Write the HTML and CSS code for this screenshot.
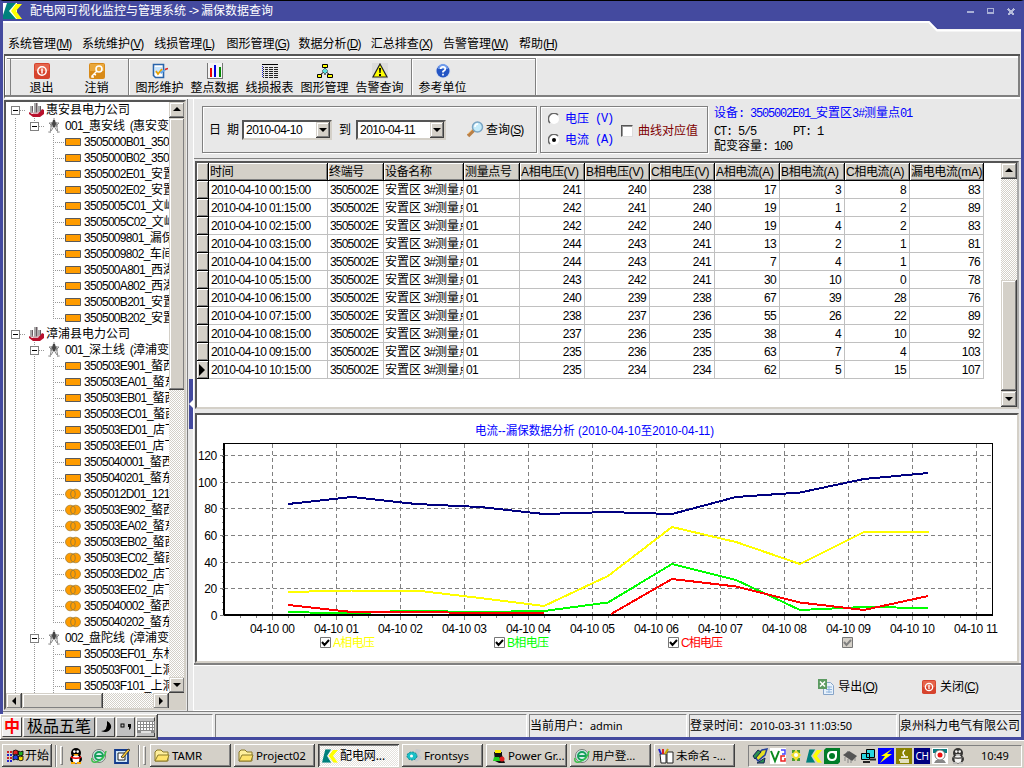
FILE: index.html
```html
<!DOCTYPE html>
<html lang="zh-CN">
<head>
<meta charset="utf-8">
<title>配电网可视化监控与管理系统</title>
<link rel="stylesheet" href="styles.css">
</head>
<body>
<svg class="defs" width="0" height="0">
  <symbol id="company" viewBox="0 0 16 16"><path d="M2 4h3v7H2zM6 1h3v11H6zM10 4h3v7h-3z" fill="#aaa"/><path d="M4 4h1v7H4zM8 1h1.500v11H8zM12 4h1v7h-1z" fill="#665a60"/><path d="M1 10l3 2 4-1 4-1 2-3 2 1v4l-4 3H5l-4-3z" fill="#b8102c"/><path d="M3 9l4 2 5-2-2 3H6z" fill="#ddb0b8"/></symbol>
  <symbol id="tower" viewBox="0 0 16 16"><path d="M8 0v4M3 5h10M4 8h8M6 4L4 15M10 4l2 11M6 5l5 8M10 5l-5 8M3 5l3 3M13 5l-3 3" stroke="#888" fill="none"/><path d="M7 2h2l1 4-1 3H7L6 6z" fill="#444"/><path d="M2 14h3M11 14h3" stroke="#aaa"/></symbol>
  <symbol id="bar" viewBox="0 0 16 16"><path d="M.5 4.500h15v7H.5z" fill="#ff9c00" stroke="#5a5a5a"/></symbol>
  <symbol id="coil" viewBox="0 0 16 16"><circle cx="5.300" cy="8" r="4.800" fill="#ff9c00" stroke="#a5813a" stroke-width=".8"/><circle cx="10.700" cy="8" r="4.800" fill="#ff9c00" stroke="#a5813a" stroke-width=".8"/><ellipse cx="8" cy="8" rx="2.300" ry="3.900" fill="#ff9c00" stroke="#8d793f" stroke-width=".8"/></symbol>
  <symbol id="power" viewBox="0 0 16 16"><rect width="16" height="16" rx="2" fill="#d6432d"/><rect x="1" y="1" width="14" height="7" rx="1" fill="#e5654c"/><circle cx="8" cy="8" r="4.200" fill="none" stroke="#fff" stroke-width="1.500"/><path d="M8 5.500v5" stroke="#fff" stroke-width="1.500"/></symbol>
  <symbol id="klogo" viewBox="0 0 19 16"><path d="M0 0h14v16H0z" fill="#fff"/><path d="M4 0h9L6 8l7 8H0V12z" fill="#00807c"/><path d="M13 1h6l-6 7 6 8h-5L8 8z" fill="#ff0"/></symbol>
  <symbol id="klogo-small" viewBox="0 0 19 16"><path d="M4 0h7L6 8l5 8H0z" fill="#00807c"/><path d="M13 1h6l-6 7 6 8h-5L8 8z" fill="#ff0"/></symbol>
  <symbol id="folder" viewBox="0 0 16 14"><path d="M1 12V3l2-2h4l2 2h5v9z" fill="#ffef9c" stroke="#8b7a2a"/><path d="M1 12l3-6h11l-2 6z" fill="#ffe36b" stroke="#8b7a2a"/></symbol>
  <symbol id="browser" viewBox="0 0 16 16"><circle cx="8" cy="8" r="6.500" fill="#d8f0ec" stroke="#777"/><circle cx="8" cy="8" r="4" fill="none" stroke="#16a05c" stroke-width="2"/><path d="M5 8h7" stroke="#16a05c" stroke-width="2"/><path d="M1 10Q0 15 5 14Q14 11 15 3" fill="none" stroke="#3ac04a" stroke-width="1.500"/></symbol>
  <symbol id="up" viewBox="0 0 16 16"><path d="M8 5l4 4H4z"/></symbol>
  <symbol id="down" viewBox="0 0 16 16"><path d="M4 6h8l-4 4z"/></symbol>
  <symbol id="penguin" viewBox="0 0 16 16"><ellipse cx="8" cy="5" rx="5" ry="5"/><ellipse cx="8" cy="11" rx="6" ry="4.500"/><ellipse cx="8" cy="11" rx="3.500" ry="4" fill="#fff"/><circle cx="6.300" cy="3.600" r="1.300" fill="#fff"/><circle cx="9.700" cy="3.600" r="1.300" fill="#fff"/><path d="M5 6h6l-3 2z" fill="#fa0"/><path d="M3 8q5 3 10 0v2q-5 2-10 0z" fill="#e00"/><path d="M3 14h4v2H3zM9 14h4v2H9z" fill="#fa0"/></symbol>
</svg>

<div class="window">
  <header class="title">
    <svg class="title-logo" width="19" height="16" viewBox="0 0 19 16"><use href="#klogo"/></svg>
    <span class="title-text">配电网可视化监控与管理系统<i> -&gt; </i>漏保数据查询</span>
    <svg class="notch" width="95" height="12" viewBox="926 20 95 12"><path d="M926 20h95v9h-84l-9-8z" fill="#444a9f"/><path d="M926 22h3l8 8.500h84" fill="none" stroke="#fff" stroke-width="2"/></svg>
    <svg class="winbtns" width="52" height="10" viewBox="0 0 52 10" shape-rendering="crispEdges"><path d="M1 6h7M21.500 2.500h6v5h-6zM21 7h7" stroke="#a9b0d6" stroke-width="1.500" fill="none"/><path d="M42 3l6 6M48 3l-6 6" stroke="#b4badb" stroke-width="2"/></svg>
  </header>
  <nav class="menu">
    <span>系统管理<i>(<u>M</u>)</i></span><span>系统维护<i>(<u>V</u>)</i></span><span>线损管理<i>(<u>L</u>)</i></span><span>图形管理<i>(<u>G</u>)</i></span><span>数据分析<i>(<u>D</u>)</i></span><span>汇总排查<i>(<u>X</u>)</i></span><span class="wide">告警管理<i>(<u>W</u>)</i></span><span>帮助<i>(<u>H</u>)</i></span>
  </nav>
  <div class="toolbar">
    <div class="tools">
      <div class="group first">
        <div class="tool"><svg width="16" height="16"><use href="#power"/></svg>退出</div>
        <div class="tool"><svg width="16" height="16" viewBox="0 0 16 16"><rect width="16" height="16" rx="2" fill="#d88a18"/><rect x="1" y="1" width="14" height="7" fill="#eaa83c"/><circle cx="10" cy="6" r="3" fill="none" stroke="#fff" stroke-width="1.600"/><path d="M8 8l-5 5v1h2M5 11l2 1" fill="none" stroke="#fff" stroke-width="1.500"/></svg>注销</div>
      </div>
      <div class="group second">
        <div class="tool"><svg width="16" height="16" viewBox="0 0 16 16"><path d="M1.500 1.500h10v13h-8l-2-2z" fill="#fff" stroke="#2864ac" stroke-width="1.600"/><path d="M3 4h7v6H3z" fill="#c8e6ff"/><path d="M4 8l2 3 4-5" fill="none" stroke="#e8a000" stroke-width="1.700"/><path d="M8 9l5-3 1 1-5 4z" fill="#61a5e8"/><path d="M13 6.500l3-1" stroke="#d22" stroke-width="1.500"/></svg>图形维护</div>
        <div class="tool"><svg width="16" height="16" viewBox="0 0 16 16" shape-rendering="crispEdges"><path d="M0 0h16v16H0z" fill="#f4f4f4"/><path d="M.5 0v15.500H15.500V0" stroke="#777" fill="none"/><path d="M3 5h2v9H3z" fill="#e00"/><path d="M7 2h2v12H7z" fill="#00d"/><path d="M12 4h2v10h-2z" fill="#080"/></svg>整点数据</div>
        <div class="tool"><svg width="16" height="16" viewBox="0 -1 16 16" shape-rendering="crispEdges"><path d="M0 .5h16" stroke="#000"/><path d="M1 3.500h15M1 5.500h15M1 7.500h15M1 9.500h15M1 11.500h15M1 13.500h15" stroke="#222"/><path d="M.5 2v12" stroke="#22c" stroke-dasharray="1 1"/><path d="M2.500 1v14M6.500 1v14M11.500 1v14" stroke="#e8e8e8"/></svg>线损报表</div>
        <div class="tool"><svg width="16" height="16" viewBox="0 0 16 16"><path d="M8 4v8M8 8l-5 4M8 8l5 4" stroke="#000"/><path d="M5.500 1.500h5v3h-5zM.5 11.500h4v3h-4zM10.500 11.500h5v3h-5z" fill="#ff0" stroke="#000"/><path d="M8 5l3 3-3 3-3-3z" fill="#5ce0e0" stroke="#333" stroke-width=".5"/></svg>图形管理</div>
        <div class="tool"><svg width="16" height="16" viewBox="0 0 16 16"><path d="M0 0h16v16H0z" fill="#ddd"/><path d="M8 1l7 13H1z" fill="#ff0" stroke="#222" stroke-width="1.200"/><path d="M7 5h2l-.4 5H7.400zM7 11h2v2H7z"/></svg>告警查询</div>
      </div>
      <div class="group third">
        <div class="tool"><svg width="16" height="16" viewBox="0 0 16 16"><circle cx="8" cy="8" r="7.500" fill="#d9e0ee"/><circle cx="8" cy="8" r="6.500" fill="#2455c4"/><path d="M3 6a5 5 0 0 1 10 0z" fill="#6f9bea"/><path d="M5.700 6q0-2.200 2.300-2.200T10.300 6Q10.300 7.200 8 8.600v1M8 10.800v1.700" stroke="#fff" stroke-width="1.700" fill="none"/></svg>参考单位</div>
      </div>
    </div>
  </div>

  <div class="work">
    <aside class="treepane">
      <div class="tree">
        <div class="row l0 top"><b class="box"></b><b class="dots"></b><svg><use href="#company"/></svg>惠安县电力公司</div>
        <div class="row l1 end"><b class="box"></b><b class="dots"></b><svg><use href="#tower"/></svg><i>001_</i>惠安线<s></s><i>(</i>惠安变</div>
        <div class="row l2"><b class="dots"></b><svg><use href="#bar"/></svg><i>3505000B01_350</i></div>
        <div class="row l2"><b class="dots"></b><svg><use href="#bar"/></svg><i>3505000B02_350</i></div>
        <div class="row l2"><b class="dots"></b><svg><use href="#bar"/></svg><i>3505002E01_</i>安置</div>
        <div class="row l2"><b class="dots"></b><svg><use href="#bar"/></svg><i>3505002E02_</i>安置</div>
        <div class="row l2"><b class="dots"></b><svg><use href="#bar"/></svg><i>3505005C01_</i>文屿</div>
        <div class="row l2"><b class="dots"></b><svg><use href="#bar"/></svg><i>3505005C02_</i>文屿</div>
        <div class="row l2"><b class="dots"></b><svg><use href="#bar"/></svg><i>3505009801_</i>漏保</div>
        <div class="row l2"><b class="dots"></b><svg><use href="#bar"/></svg><i>3505009802_</i>车间</div>
        <div class="row l2"><b class="dots"></b><svg><use href="#bar"/></svg><i>350500A801_</i>西湖</div>
        <div class="row l2"><b class="dots"></b><svg><use href="#bar"/></svg><i>350500A802_</i>西湖</div>
        <div class="row l2"><b class="dots"></b><svg><use href="#bar"/></svg><i>350500B201_</i>安置</div>
        <div class="row l2 last"><b class="dots"></b><svg><use href="#bar"/></svg><i>350500B202_</i>安置</div>
        <div class="row l0"><b class="box"></b><b class="dots"></b><svg><use href="#company"/></svg>漳浦县电力公司</div>
        <div class="row l1"><b class="box"></b><b class="dots"></b><svg><use href="#tower"/></svg><i>001_</i>深土线<s></s><i>(</i>漳浦变</div>
        <div class="row l2 c"><b class="dots"></b><svg><use href="#bar"/></svg><i>350503E901_</i>螯西</div>
        <div class="row l2 c"><b class="dots"></b><svg><use href="#bar"/></svg><i>350503EA01_</i>螯东</div>
        <div class="row l2 c"><b class="dots"></b><svg><use href="#bar"/></svg><i>350503EB01_</i>螯西</div>
        <div class="row l2 c"><b class="dots"></b><svg><use href="#bar"/></svg><i>350503EC01_</i>螯西</div>
        <div class="row l2 c"><b class="dots"></b><svg><use href="#bar"/></svg><i>350503ED01_</i>店下</div>
        <div class="row l2 c"><b class="dots"></b><svg><use href="#bar"/></svg><i>350503EE01_</i>店下</div>
        <div class="row l2 c"><b class="dots"></b><svg><use href="#bar"/></svg><i>3505040001_</i>螯西</div>
        <div class="row l2 c"><b class="dots"></b><svg><use href="#bar"/></svg><i>3505040201_</i>螯东</div>
        <div class="row l2 c"><b class="dots"></b><svg><use href="#coil"/></svg><i>3505012D01_121</i></div>
        <div class="row l2 c"><b class="dots"></b><svg><use href="#coil"/></svg><i>350503E902_</i>螯西</div>
        <div class="row l2 c"><b class="dots"></b><svg><use href="#coil"/></svg><i>350503EA02_</i>螯东</div>
        <div class="row l2 c"><b class="dots"></b><svg><use href="#coil"/></svg><i>350503EB02_</i>螯西</div>
        <div class="row l2 c"><b class="dots"></b><svg><use href="#coil"/></svg><i>350503EC02_</i>螯西</div>
        <div class="row l2 c"><b class="dots"></b><svg><use href="#coil"/></svg><i>350503ED02_</i>店下</div>
        <div class="row l2 c"><b class="dots"></b><svg><use href="#coil"/></svg><i>350503EE02_</i>店下</div>
        <div class="row l2 c"><b class="dots"></b><svg><use href="#coil"/></svg><i>3505040002_</i>螯西</div>
        <div class="row l2 c last"><b class="dots"></b><svg><use href="#coil"/></svg><i>3505040202_</i>螯东</div>
        <div class="row l1"><b class="box"></b><b class="dots"></b><svg><use href="#tower"/></svg><i>002_</i>盘陀线<s></s><i>(</i>漳浦变</div>
        <div class="row l2 c"><b class="dots"></b><svg><use href="#bar"/></svg><i>350503EF01_</i>东林</div>
        <div class="row l2 c"><b class="dots"></b><svg><use href="#bar"/></svg><i>350503F001_</i>上洞</div>
        <div class="row l2 c"><b class="dots"></b><svg><use href="#bar"/></svg><i>350503F101_</i>上洞</div>
      </div>
      <div class="vscroll tree-v"><div class="sbtn"><svg><use href="#up"/></svg></div><div class="thumb"></div><div class="gap"></div><div class="sbtn"><svg><use href="#down"/></svg></div></div>
      <div class="hscroll"><div class="sbtn"><svg viewBox="0 0 16 16"><path d="M10 4v8L6 8z"/></svg></div><div class="thumb"></div><div class="gap"></div><div class="sbtn"><svg viewBox="0 0 16 16"><path d="M6 4v8l4-4z"/></svg></div></div>
      <div class="corner"></div>
    </aside>
    <div class="splitter"><svg width="5" height="50" viewBox="0 0 5 50"><path d="M0 0h5v50H0z" fill="#444a9f"/><path d="M5 20v10L0 25z" fill="#fff"/></svg></div>

    <main class="main">
      <section class="filter">
        <div class="frame dates">
          <span class="lab">日&ensp;期</span>
          <div class="combo">2010-04-10<div class="cbtn"><svg width="14" height="16" viewBox="1 0 14 16"><use href="#down" width="16" height="16"/></svg></div></div>
          <span class="lab to">到</span>
          <div class="combo">2010-04-11<div class="cbtn"><svg width="14" height="16" viewBox="1 0 14 16"><use href="#down" width="16" height="16"/></svg></div></div>
          <svg class="lens" width="17" height="17" viewBox="0 0 17 17"><path d="M1 15l6-6" stroke="#b98047" stroke-width="3.500"/><path d="M1 13l5-5" stroke="#edb266"/><circle cx="10.500" cy="6" r="5" fill="#c5ecfb" stroke="#7aa5c4" stroke-width="1.500"/><path d="M8 6q0-3 3-3" stroke="#fff" stroke-width="1.500" fill="none"/></svg>
          <span class="query">查询<i>(<u>S</u>)</i></span>
        </div>
        <div class="frame modes">
          <div class="radios">
            <label><svg width="12" height="12" viewBox="0 0 12 12"><circle cx="6" cy="6" r="5" fill="#fff"/><path d="M2 10A5.500 5.500 0 1 1 10 2" fill="none" stroke="#666" stroke-width="1.500"/></svg>电压<em>&nbsp;(V)</em></label>
            <label><svg width="12" height="12" viewBox="0 0 12 12"><circle cx="6" cy="6" r="5" fill="#fff"/><path d="M2 10A5.500 5.500 0 1 1 10 2" fill="none" stroke="#666" stroke-width="1.500"/><circle cx="6" cy="6" r="2"/></svg>电流<em>&nbsp;(A)</em></label>
          </div>
          <div class="check"><b></b>曲线对应值</div>
        </div>
        <div class="info">
          <div class="blue">设备<em>: 3505002E01_</em>安置区<em>3#</em>测量点<em>01</em></div>
          <div class="ct"><em>CT: 5/5</em><em class="pt">PT: 1</em></div>
          <div>配变容量<em>: 100</em></div>
        </div>
      </section>

      <section class="gridpane">
        <table class="grid">
          <colgroup><col class="c0"><col class="c1"><col class="c2"><col class="c3"><col class="c4"><col class="c5"><col class="c5"><col class="c5"><col class="c5"><col class="c5"><col class="c5"><col class="c6"></colgroup>
          <tr><th></th><th>时间</th><th>终端号</th><th>设备名称</th><th>测量点号</th><th>A相电压(V)</th><th>B相电压(V)</th><th>C相电压(V)</th><th>A相电流(A)</th><th>B相电流(A)</th><th>C相电流(A)</th><th>漏电电流(mA)</th></tr>
          <tr><th></th><td>2010-04-10 00:15:00</td><td>3505002E</td><td class="dev">安置区<i> 3#</i>测量点</td><td>01</td><td>241</td><td>240</td><td>238</td><td>17</td><td>3</td><td>8</td><td>83</td></tr>
          <tr><th></th><td>2010-04-10 01:15:00</td><td>3505002E</td><td class="dev">安置区<i> 3#</i>测量点</td><td>01</td><td>242</td><td>241</td><td>240</td><td>19</td><td>1</td><td>2</td><td>89</td></tr>
          <tr><th></th><td>2010-04-10 02:15:00</td><td>3505002E</td><td class="dev">安置区<i> 3#</i>测量点</td><td>01</td><td>242</td><td>242</td><td>240</td><td>19</td><td>4</td><td>2</td><td>83</td></tr>
          <tr><th></th><td>2010-04-10 03:15:00</td><td>3505002E</td><td class="dev">安置区<i> 3#</i>测量点</td><td>01</td><td>244</td><td>243</td><td>241</td><td>13</td><td>2</td><td>1</td><td>81</td></tr>
          <tr><th></th><td>2010-04-10 04:15:00</td><td>3505002E</td><td class="dev">安置区<i> 3#</i>测量点</td><td>01</td><td>244</td><td>243</td><td>241</td><td>7</td><td>4</td><td>1</td><td>76</td></tr>
          <tr><th></th><td>2010-04-10 05:15:00</td><td>3505002E</td><td class="dev">安置区<i> 3#</i>测量点</td><td>01</td><td>243</td><td>242</td><td>241</td><td>30</td><td>10</td><td>0</td><td>78</td></tr>
          <tr><th></th><td>2010-04-10 06:15:00</td><td>3505002E</td><td class="dev">安置区<i> 3#</i>测量点</td><td>01</td><td>240</td><td>239</td><td>238</td><td>67</td><td>39</td><td>28</td><td>76</td></tr>
          <tr><th></th><td>2010-04-10 07:15:00</td><td>3505002E</td><td class="dev">安置区<i> 3#</i>测量点</td><td>01</td><td>238</td><td>237</td><td>236</td><td>55</td><td>26</td><td>22</td><td>89</td></tr>
          <tr><th></th><td>2010-04-10 08:15:00</td><td>3505002E</td><td class="dev">安置区<i> 3#</i>测量点</td><td>01</td><td>237</td><td>236</td><td>235</td><td>38</td><td>4</td><td>10</td><td>92</td></tr>
          <tr><th></th><td>2010-04-10 09:15:00</td><td>3505002E</td><td class="dev">安置区<i> 3#</i>测量点</td><td>01</td><td>235</td><td>236</td><td>235</td><td>63</td><td>7</td><td>4</td><td>103</td></tr>
          <tr><th class="cur"><svg width="6" height="12" viewBox="0 0 6 12"><path d="M0 0v12l6-6z"/></svg></th><td>2010-04-10 10:15:00</td><td>3505002E</td><td class="dev">安置区<i> 3#</i>测量点</td><td>01</td><td>235</td><td>234</td><td>234</td><td>62</td><td>5</td><td>15</td><td>107</td></tr>
        </table>
        <div class="vscroll grid-v"><div class="sbtn"><svg><use href="#up"/></svg></div><div class="gap"></div><div class="thumb"></div><div class="sbtn"><svg><use href="#down"/></svg></div></div>
      </section>

      <section class="chartpane">
        <svg class="chart" width="820" height="245" viewBox="197 415 820 245">
          <text x="475" y="435" fill="#00f" textLength="239" lengthAdjust="spacingAndGlyphs">电流--漏保数据分析 (2010-04-10至2010-04-11)</text>
          <g shape-rendering="crispEdges" fill="none">
            <path d="M224 455.500H992M224 482.500H992M224 508.500H992M224 535.500H992M224 562.500H992M224 588.500H992" stroke="#808080" stroke-dasharray="4 3"/>
            <path d="M272.500 444V614M336.500 444V614M400.500 444V614M464.500 444V614M528.500 444V614M592.500 444V614M656.500 444V614M720.500 444V614M784.500 444V614M848.500 444V614M912.500 444V614M976.500 444V614" stroke="#808080" stroke-dasharray="4 3"/>
            <path d="M224 443.500H992.500V615" stroke="#000"/>
            <path d="M224 443V615.500M223 614.500H993" stroke="#000" stroke-width="2"/>
            <path d="M220 455.500h4M220 482.500h4M220 508.500h4M220 535.500h4M220 562.500h4M220 588.500h4M220 615.500h4" stroke="#808080"/>
            <path d="M222.500 449V615" stroke="#808080" stroke-dasharray="1 5.660"/>
            <path d="M240 616.500H992" stroke="#808080" stroke-width="2" stroke-dasharray="1 15"/>
            <path d="M272 617.500H977" stroke="#808080" stroke-width="4" stroke-dasharray="1 63"/>
            <path d="M288 504L352 497L416 504L480 507L544 514L608 512L672 514L736 497L800 492.500L864 479L928 473" stroke="#000080" stroke-width="2"/>
            <path d="M288 592L352 590.500L416 590.500L480 598L544 606L608 576L672 527L736 542L800 564L864 532H929" stroke="#ff0" stroke-width="2"/>
            <path d="M288 612L352 613.500L400 611L416 611L480 612L544 611L608 602.500L672 564L736 580L800 610L864 607L928 608" stroke="#0f0" stroke-width="2"/>
            <path d="M288 605L352 612H416L480 613H544M611 614L672 579L736 586.500L800 602.500L864 610L928 596" stroke="#f00" stroke-width="2"/>
          </g>
          <g text-anchor="end"><text x="217" y="460">120</text><text x="217" y="487">100</text><text x="217" y="513">80</text><text x="217" y="540">60</text><text x="217" y="567">40</text><text x="217" y="593">20</text><text x="217" y="620">0</text></g>
          <g class="xl"><text x="250" y="633">04-10 00</text><text x="314" y="633">04-10 01</text><text x="378" y="633">04-10 02</text><text x="442" y="633">04-10 03</text><text x="506" y="633">04-10 04</text><text x="570" y="633">04-10 05</text><text x="634" y="633">04-10 06</text><text x="698" y="633">04-10 07</text><text x="762" y="633">04-10 08</text><text x="826" y="633">04-10 09</text><text x="890" y="633">04-10 10</text><text x="954" y="633">04-10 11</text></g>
          <g fill="#fff" stroke="#777"><path d="M320.500 637.500h10v10h-10zM494.500 637.500h10v10h-10zM668.500 637.500h10v10h-10z"/><path d="M842.500 637.500h10v10h-10z" fill="#d4d0c8"/></g>
          <path d="M322 642l2.500 3 4.500-5M496 642l2.500 3 4.500-5M670 642l2.500 3 4.500-5" fill="none" stroke="#000" stroke-width="2"/>
          <path d="M844 642l2.500 3 4.500-5" fill="none" stroke="#808080" stroke-width="2"/>
          <text x="333" y="647" fill="#ff0" textLength="42">A相电压</text><text x="507" y="647" fill="#0f0" textLength="42">B相电压</text><text x="681" y="647" fill="#f00" textLength="42">C相电压</text>
        </svg>
      </section>

      <section class="actions">
        <div class="act"><svg width="16" height="16" viewBox="0 0 16 16"><path d="M5.500 3.500h7l3 3v9h-10z" fill="#e7f1fb" stroke="#86a4c8"/><path d="M8 8h6M8 10.500h6M8 13h6M11 7v7" stroke="#8fb4dc"/><rect y="0" width="9" height="10" fill="#5c9b62"/><path d="M2 2.500l5 5M7 2.500l-5 5" stroke="#fff" stroke-width="1.500"/></svg><span>导出<i>(<u>O</u>)</i></span></div>
        <div class="act"><svg width="14" height="14" viewBox="0 0 16 16"><use href="#power"/></svg><span>关闭<i>(<u>C</u>)</i></span></div>
      </section>
    </main>
  </div>

  <footer class="status">
    <div class="p1"></div><div class="p2"></div><div class="p3">当前用户：<i>admin</i></div><div class="p4">登录时间：<i>2010-03-31 11:03:50</i></div><div class="p5">泉州科力电气有限公司</div>
  </footer>

  <div class="ime">
    <div class="key zh">中</div><div class="key name">极品五笔</div>
    <div class="key"><svg width="14" height="14" viewBox="0 0 14 14"><path d="M8 1q5 3 4 7q-3 6-10 3q7 0 6-10z"/></svg></div>
    <div class="key"><svg width="14" height="14" viewBox="0 0 14 14"><rect x="2" y="4" width="3" height="3" fill="none" stroke="#000"/><path d="M9 4h3v3q0 2-2 3v-3H9z"/></svg></div>
    <div class="key"><svg width="18" height="12" viewBox="0 0 18 12"><path d="M0 0h18v12H0z" fill="#8a8a8a"/><path d="M1 2h16M1 5h16M1 8h16" stroke="#fff" stroke-width="2" stroke-dasharray="2 1"/><path d="M4 11h10" stroke="#fff" stroke-width="1.500"/></svg></div>
  </div>
</div>

<div class="taskbar">
  <div class="tbtn start"><svg width="18" height="16" viewBox="0 0 18 16"><path d="M7 3q3-2 5 0v4q-2-1.500-5 0z" fill="#e02020" stroke="#000" stroke-width=".8"/><path d="M12.500 3q2 1.500 4.500 0v4q-2 1.500-4.500 0z" fill="#20b020" stroke="#000" stroke-width=".8"/><path d="M7 8q3-2 5 0v4q-2-1.500-5 0z" fill="#2040e0" stroke="#000" stroke-width=".8"/><path d="M12.500 8q2 1.500 4.500 0v4q-2 1.500-4.500 0z" fill="#ffe000" stroke="#000" stroke-width=".8"/><path d="M1 4h5M1 10h5" stroke="#c22" stroke-width="2" stroke-dasharray="2 1"/><path d="M1 7h5M1 13h5" stroke="#22c" stroke-width="2" stroke-dasharray="2 1"/></svg>开始</div>
  <b class="line"></b><b class="grip"></b>
  <div class="quick">
    <svg width="16" height="16"><use href="#penguin"/></svg>
    <svg width="16" height="16"><use href="#browser"/></svg>
    <svg width="16" height="16" viewBox="0 0 16 16"><path d="M1 2h13v13H1z" fill="#cfe6f7" stroke="#123a8c" stroke-width="1.800"/><path d="M4 5h7v7H4z" fill="#fff" stroke="#222"/><path d="M7 9l7-8 2 1-7 8z" fill="#fc3" stroke="#222" stroke-width=".8"/></svg>
  </div>
  <b class="line"></b><b class="grip"></b>
  <div class="tasks">
    <div class="tbtn"><svg width="16" height="14"><use href="#folder"/></svg>TAMR</div>
    <div class="tbtn"><svg width="16" height="14"><use href="#folder"/></svg>Project02</div>
    <div class="tbtn on"><svg width="16" height="14" viewBox="0 0 19 16"><use href="#klogo-small"/></svg>配电网...</div>
    <div class="tbtn"><svg width="16" height="16" viewBox="0 0 16 16"><path d="M8 6l2-5 5 1-2 4 3 4-6 4-3-4z" fill="#c4c7cc"/><ellipse cx="6" cy="8" rx="5" ry="4" fill="#19c0c8" stroke="#0c8890" stroke-dasharray="2 1"/><circle cx="5.500" cy="8" r="1.500" fill="#fff"/></svg>Frontsys</div>
    <div class="tbtn"><svg width="16" height="16" viewBox="0 0 16 16"><path d="M4 4h8v3l3 8H9l-4-2z" fill="#101010"/><path d="M5 2h6v3H5z" fill="#fe0"/><path d="M4 9h5l3 4H3z" fill="#1fcf20"/><circle cx="12" cy="11" r="2.500" fill="#e02020"/></svg>Power Gr...</div>
    <div class="tbtn"><svg width="16" height="16"><use href="#browser"/></svg>用户登...</div>
    <div class="tbtn"><svg width="16" height="16" viewBox="0 0 16 16"><path d="M2 6h6v9H3z" fill="#fff" stroke="#222"/><path d="M9 4h6v11H9z" fill="#fff" stroke="#222"/><path d="M3 6L1 1" stroke="#22c" stroke-width="2"/><path d="M5 6V1" stroke="#d22" stroke-width="2"/><path d="M7 6l3-5" stroke="#ca0" stroke-width="2"/></svg>未命名 -...</div>
  </div>
  <div class="tray">
    <svg width="16" height="16" viewBox="0 0 16 16"><path d="M3 9l7-7 5-1-2 6-7 6z" fill="#e6e020" stroke="#24409c" stroke-width="1.500"/><path d="M1 8l5-6 3 2-6 7zM5 15l8-5-1 5z" fill="#2a8f50" stroke="#125"/></svg>
    <svg width="16" height="16" viewBox="0 0 16 16"><path d="M0 0h16v16H0z" fill="#fff"/><path d="M1 3l4 10 4-10" fill="none" stroke="#0a8a20" stroke-width="2"/><path d="M11 2h4v4h-3" fill="none" stroke="#44f" stroke-width="1.500"/><path d="M15 8h-4v5h4v-3" fill="none" stroke="#e22" stroke-width="1.500"/></svg>
    <svg width="16" height="16" viewBox="0 0 16 16"><path d="M4 2h3v3H4zM9 2h3v3H9zM4 10h3v3H4zM9 10h3v3H9z" fill="#4a9a30"/><path d="M8 2l5 5-5 6-5-6z" fill="#f1e02c"/><circle cx="8" cy="7" r="2" fill="#fff"/></svg>
    <svg width="16" height="14" viewBox="0 0 19 16"><use href="#klogo-small"/></svg>
    <svg width="16" height="16" viewBox="0 0 16 16"><path d="M2 0h14v14l-2 2H0V2z" fill="#007c28"/><path d="M3 8q0-5 5-5h5v5q0 5-5 5t-5-5z" fill="#fff"/><circle cx="8" cy="8" r="3" fill="#007c28"/></svg>
    <svg width="16" height="16" viewBox="0 0 16 16"><path d="M1 7l6-4 8 5-5 5z" fill="#555"/><path d="M3 9v4M6 11v4M9 12v3M13 10v3M4 5l2-2" stroke="#888"/></svg>
    <svg width="16" height="16" viewBox="0 0 16 16"><path d="M6.500 1.500h8v8h-8zM1.500 5.500h8v6h-8z" fill="#27d5e0" stroke="#000"/><path d="M3 14h7M10 11.500h6" stroke="#222" stroke-width="2"/></svg>
    <svg width="16" height="16" viewBox="0 0 16 16"><path d="M0 0h16v16H0z" fill="#00f"/><path d="M14 1L3 8h4l-5 7 12-9H9z" fill="#ff0"/></svg>
    <svg width="16" height="16" viewBox="0 0 16 16"><path d="M0 0h16v16H0z" fill="#8a8200"/><path d="M3 12h10M5 9h7M9 2q-4 3 0 6M4 14h9" stroke="#fff" stroke-width="1.500" fill="none"/></svg>
    <span class="ch">CH</span>
    <svg width="16" height="16" viewBox="0 0 16 16"><path d="M0 0h16v16H0z" fill="#fff"/><path d="M1 1h14v4H1z" fill="#087c80"/><circle cx="8" cy="7" r="5" fill="#fff" stroke="#777"/><circle cx="8" cy="7" r="2.500" fill="#e11"/><path d="M4 12h8l2 3H2z" fill="#888"/></svg>
    <svg class="gray" width="16" height="16"><use href="#penguin"/></svg>
    <span class="clock">10:49</span>
  </div>
</div>
</body>
</html>
```
FILE: styles.css
```css
* { box-sizing: border-box; }
body { margin: 0; width: 1024px; height: 768px; overflow: hidden; background: #d4d0c8; color: #000; font: 12px/16px "Liberation Sans", "Noto Sans CJK SC", sans-serif; white-space: nowrap; }
.defs { display: block; position: absolute; }
svg { display: block; flex: none; }
i, em { font-style: normal; }
i { letter-spacing: -.9px; }
em { font-family: "Liberation Mono", monospace; letter-spacing: -1.2px; white-space: pre; }
b { font-weight: normal; display: block; flex: none; }

.window { position: relative; height: 740px; background: #e8e8e8; border: 3px solid #444a9f; border-top: 1px solid #000; display: flex; flex-direction: column; }
.title { position: relative; height: 22px; flex: none; background: #444a9f; border-bottom: 2px solid #fff; display: flex; align-items: center; color: #fff; }
.title-text { margin-left: 8px; }
.title-text i { white-space: pre; letter-spacing: -.7px; }
.notch { position: absolute; right: 0; top: 19px; }
.winbtns { position: absolute; right: 3px; top: 5px; }
.menu { height: 31px; flex: none; padding: 13px 0 0 5px; display: flex; }
.menu span { width: 72.200px; }
.menu .wide { width: 76px; }
.menu span:first-child { width: 74px; }

.toolbar { height: 45px; flex: none; margin-left: 1px; border-top: 2px solid #555; border-left: 1px solid #555; border-bottom: 2px solid #fff; width: 1016px; display: flex; box-shadow: inset -2px -2px #808080, inset 1px 2px #fff; }
.tools { margin: 2px 0 2px 2px; width: 529px; border-top: 1px solid #808080; border-right: 1px solid #808080; display: flex; box-shadow: inset 0 1px #fff, 1px 0 #fff; }
.group { display: flex; padding-top: 4px; border-right: 1px solid #808080; box-shadow: 1px 0 #fff; }
.group.first { margin-left: 3px; padding-left: 3px; width: 119px; border-left: 1px solid #808080; }
.group.second { padding-left: 3px; width: 283px; }
.group.third { padding-left: 3px; border: 0; box-shadow: none; }
.tool { width: 55px; flex: none; display: flex; flex-direction: column; align-items: center; justify-content: space-between; height: 33px; line-height: 16px; }

.work { height: 612px; flex: none; display: flex; }
.treepane { margin: 1px 0 0 1px; width: 182px; height: 610px; background: #fff; border: 2px solid #555; border-right: 2px solid #d4d0c8; border-bottom: 2px solid #d4d0c8; display: grid; grid-template: 591px 16px / 163px 16px; overflow: hidden; }
.tree { overflow: hidden; }
.row { height: 16px; display: flex; align-items: center; background-repeat: no-repeat; background-image: repeating-linear-gradient(#999 0 1px, transparent 1px 2px), repeating-linear-gradient(#999 0 1px, transparent 1px 2px), repeating-linear-gradient(#999 0 1px, transparent 1px 2px); background-size: 1px 100%, 0 0, 0 0; background-position: 9px 0, 47px 0, 28px 0; }
.row > svg { width: 16px; height: 16px; margin-right: 3px; }
.row i { letter-spacing: -.700px; }
.row s { width: 9px; }
.box { width: 9px; height: 9px; border: 1px solid #808080; background: linear-gradient(#000, #000) center / 5px 1px no-repeat #fff; }
.row .dots { width: 6px; height: 1px; margin-right: 2px; background: repeating-linear-gradient(90deg, #999 0 1px, transparent 1px 2px); }
.l0 { padding-left: 5px; }
.row.l0 > svg { margin-right: 2px; }
.top { background-size: 0 0; }
.l1 { padding-left: 24px; background-size: 1px 100%, 0 0, 1px 100%; }
.l1 .dots { margin-right: 1px; }
.end { background-size: 1px 100%, 0 0, 1px 8px; }
.l2 { padding-left: 47px; background-size: 1px 100%, 1px 100%, 0 0; }
.l2 .dots { width: 11px; margin-right: 1px; }
.l2.c { background-size: 1px 100%, 1px 100%, 1px 100%; }
.l2.last { background-size: 1px 100%, 1px 8px, 0 0; }
.l2.c.last { background-size: 1px 100%, 1px 8px, 1px 100%; }

.vscroll, .hscroll { display: flex; background: repeating-conic-gradient(#d4d0c8 0 25%, #fff 0 50%) 0 0 / 2px 2px; }
.vscroll { flex-direction: column; width: 16px; }
.sbtn, .thumb, .cbtn { flex: none; background: #d4d0c8; box-shadow: inset -1px -1px #404040, inset 1px 1px #d4d0c8, inset -2px -2px #808080, inset 2px 2px #fff; }
.sbtn { width: 16px; height: 16px; }
.sbtn svg { width: 16px; height: 16px; }
.gap { flex: 1; }
.tree-v .thumb { height: 272px; }
.hscroll .thumb { width: 81px; }
.hscroll { height: 16px; }
.corner { background: #d4d0c8; }

.splitter { width: 6px; display: flex; padding-top: 280px; padding-left: 1px; border-left: 1px solid #808080; margin-left: 1px; }
.splitter svg { width: 5px; }
.main { flex: 1; min-width: 0; display: flex; flex-direction: column; border-left: 1px solid #fff; }
.filter { height: 60px; flex: none; border-bottom: 1px solid #808080; display: flex; padding: 7px 0 0 8px; }
.frame { height: 47px; border: 1px solid #808080; box-shadow: 1px 1px #fff, inset 1px 1px #fff; display: flex; align-items: center; }
.dates { width: 335px; padding-left: 6px; }
.lab { width: 33px; }
.to { width: 12px; margin: 0 5px 0 7px; }
.combo { width: 90px; height: 20px; background: #fff; border: 2px solid; border-color: #555 #d4d0c8 #d4d0c8 #555; display: flex; justify-content: space-between; padding-left: 2px; letter-spacing: -.530px; line-height: 16px; }
.cbtn { width: 14px; height: 16px; }
.lens { margin-left: 21px; }
.query { margin-left: 2px; }
.modes { margin-left: 3px; width: 168px; padding-left: 7px; }
.radios { display: flex; flex-direction: column; gap: 5px; color: #00f; width: 73px; }
.radios label { display: flex; align-items: center; height: 16px; }
.radios svg { margin-right: 5px; }
.check { display: flex; color: #800000; align-items: center; padding-top: 3px; }
.check b { width: 12px; height: 12px; background: #fff; border: 1px solid; border-color: #555 #ddd #ddd #555; box-shadow: inset 1px 1px #999; margin-right: 5px; }
.info { margin-left: 6px; line-height: 16px; margin-top: -1px; }
.ct { margin: 1px 0 -2px; }
.blue { color: #00f; }
.pt { margin-left: 37px; }

.gridpane { height: 248px; flex: none; margin: 2px 2px 0 1px; width: 824px; background: #fff; border: 2px solid #555; border-right: 2px solid #aaa; border-bottom: 2px solid #d4d0c8; display: flex; justify-content: space-between; overflow: hidden; }
.grid { table-layout: fixed; border-collapse: separate; border-spacing: 0; width: 787px; height: 216px; flex: none; align-self: flex-start; letter-spacing: -.620px; }
.c0 { width: 12px; } .c1 { width: 119px; } .c2 { width: 56px; } .c3 { width: 80px; } .c4 { width: 56px; } .c5 { width: 65px; } .c6 { width: 74px; }
.grid tr { height: 18px; }
.grid td, .grid th { height: 18px; padding: 0 2px; line-height: 16px; overflow: hidden; text-align: left; font-weight: normal; border-right: 1px solid #c0c0c0; border-bottom: 1px solid #c0c0c0; }
.grid th { background: #d4d0c8; border-color: #000; box-shadow: inset 1px 1px #fff, inset -1px -1px #808080; padding: 0 1px; letter-spacing: -.350px; }
.grid td:nth-child(3) { letter-spacing: -.8px; }
.grid td:nth-child(n+6) { text-align: right; padding-right: 3px; }
.grid .dev { letter-spacing: 0; padding-left: 1px; }
.cur svg { margin-left: 1px; }
.grid-v .thumb { height: 111px; }

.chartpane { height: 250px; flex: none; margin: 4px 2px 0 1px; width: 824px; background: #fff; border: 2px solid #555; border-right-color: #d4d0c8; border-bottom: 2px solid #d4d0c8; }
.chart { font-size: 12px; }
.chart g text { letter-spacing: -.300px; }
.chart .xl text { letter-spacing: -.350px; }
.actions { flex: 1; border-top: 2px solid #808080; border-bottom: 1px solid #fff; display: flex; justify-content: flex-end; align-items: center; gap: 45px; padding: 0 43px 2px 0; box-shadow: inset 0 1px #fff; }
.act { display: flex; align-items: center; gap: 4px; }

.status { height: 26px; flex: none; border-top: 1px solid #808080; padding-top: 2px; display: flex; gap: 2px; overflow: hidden; }
.status div { flex: none; border: 1px solid #808080; border-right-color: #fff; border-bottom: 0; line-height: 22px; padding-left: 0; }
.status i, .taskbar { font-family: "Noto Sans", "Noto Sans CJK SC", sans-serif; font-size: 11px; letter-spacing: -.100px; }
.p1 { width: 210px; } .p2 { width: 312px; } .p3 { width: 158px; } .p4 { width: 208px; } .p5 { width: 123px; }

.ime { position: absolute; left: -3px; top: 713px; width: 158px; height: 26px; background: #d4d0c8; box-shadow: inset -1px -1px #404040, inset 1px 1px #fff, inset -2px -2px #808080; display: flex; padding: 3px 2px; gap: 1px; }
.key { width: 19px; height: 20px; background: #c0c0c0; border: 1px solid; border-color: #fff #404040 #404040 #fff; display: flex; align-items: center; justify-content: center; }
.zh { color: #f00; font-size: 16px; font-weight: bold; width: 20px; background: #eee; }
.name { width: 72px; font-size: 16px; }

.taskbar { height: 28px; border-top: 1px solid #fff; display: flex; align-items: center; padding: 2px 2px 0; }
.tbtn { width: 81px; height: 23px; padding-left: 4px; display: flex; align-items: center; gap: 2px; flex: none; box-shadow: inset -1px -1px #404040, inset 1px 1px #fff, inset -2px -2px #808080; font-size: 11.500px; }
.start { width: 50px; gap: 1px; font-size: 12px; }
.on { background: repeating-conic-gradient(#e4e1dc 0 25%, #fff 0 50%) 0 0 / 2px 2px; box-shadow: inset 1px 1px #404040, inset -1px -1px #fff, inset 2px 2px #808080; font-size: 12px; }
.line { width: 2px; height: 22px; border-left: 1px solid #808080; border-right: 1px solid #fff; margin-left: 3px; }
.grip { width: 3px; height: 19px; margin-left: 3px; border: 1px solid; border-color: #fff #808080 #808080 #fff; }
.quick { display: flex; gap: 7px; padding: 0 5px 0 5px; }
.tasks { display: flex; gap: 3px; margin-left: 4px; }
.tray { margin-left: auto; width: 274px; height: 22px; border: 1px solid; border-color: #808080 #fff #fff #808080; display: flex; align-items: center; gap: 2px; padding-left: 3px; }
.ch { width: 16px; height: 16px; background: #000080; color: #fff; font-size: 10px; text-align: center; letter-spacing: -.300px; }
.gray { filter: grayscale(1); opacity: .75; }
.clock { margin-left: 13px; }
```
